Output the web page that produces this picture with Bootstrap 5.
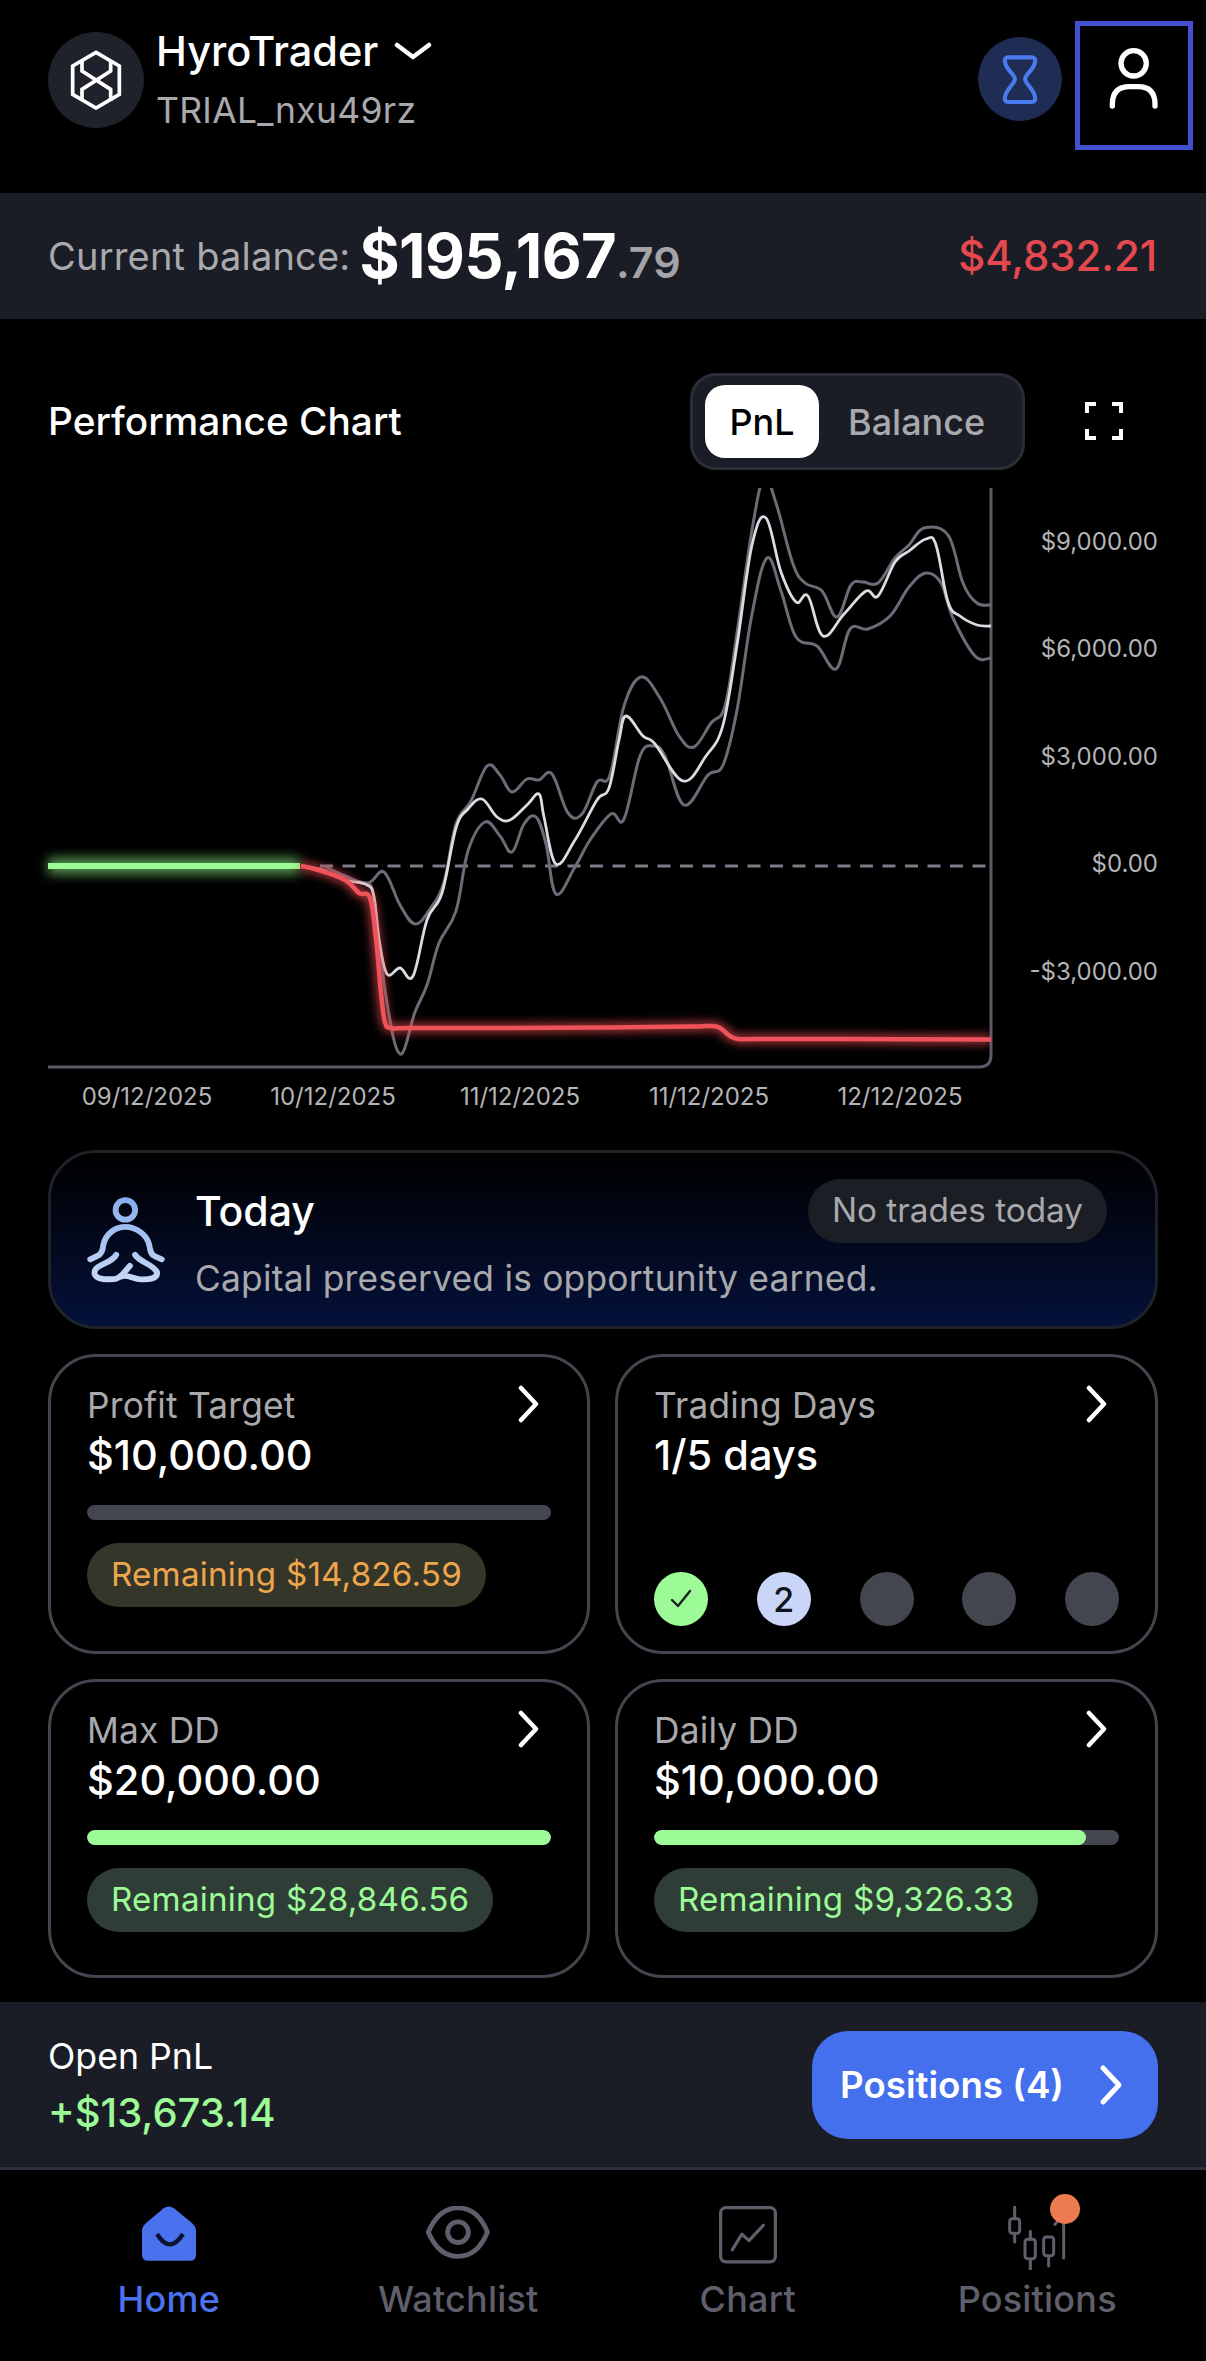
<!DOCTYPE html>
<html lang="en">
<head>
<meta charset="utf-8">
<title>HyroTrader</title>
<link rel="stylesheet" href="https://cdn.jsdelivr.net/npm/bootstrap@5.3.0/dist/css/bootstrap.min.css">
<style>
html,body{margin:0;background:#000;}
body{width:1206px;height:2361px;overflow:hidden;font-family:Inter,"Liberation Sans",sans-serif;color:#fff;}
.muted{color:#a9a9ad;}
.top-bar{height:193px;padding:21px 13px 0 48px;}
.logo-disc{width:96px;height:96px;margin-top:11px;background:#1f212b;border-radius:50%;}
.brand-box{margin-left:12px;}
.brand-name{font-size:41.5px;line-height:50px;font-weight:500;margin-top:5px;}
.brand-sub{font-size:35.5px;line-height:40px;margin-top:15px;letter-spacing:.3px;}
.timer-disc{width:84px;height:84px;margin-top:16px;background:#1f2d55;border-radius:50%;}
.user-box{width:118px;height:129px;margin-left:13px;padding-bottom:13px;border:5px solid #4450cf;}
.balance-bar{height:126px;padding:0 49px 0 48px;background:#1a1d26;}
.bal-label{font-size:38px;letter-spacing:.2px;}
.bal-main{font-size:61.4px;font-weight:700;margin-left:9px;letter-spacing:-.6px;line-height:76px;}
.bal-cents{font-size:43px;font-weight:600;color:#a4a4a8;}
.bal-red{font-size:41.8px;font-weight:500;color:#e5484f;}
.chart-head{height:169px;padding:54px 48px 18px;}
.chart-title{font-size:38.8px;font-weight:500;}
.seg{width:335px;height:97px;padding:10px 12px;background:#1a1d26;border:3px solid #2a2d36;border-radius:26px;}
.seg-on{width:114px;height:73px;background:#fff;color:#000;border-radius:20px;font-size:36px;font-weight:500;}
.seg-off{font-size:36px;font-weight:500;color:#a9a9ad;margin-left:29px;}
.expand{width:38px;height:38px;margin-left:60px;margin-right:35px;margin-top:-2px;display:block;}
.chart-svg{display:block;width:1206px;height:632px;}
.chart-svg text{font-family:Inter,"Liberation Sans",sans-serif;font-size:24px;fill:#b4b4b8;}
.today{margin:30px 48px 0;height:179px;padding:0 48px 0 36px;border:3px solid #1f2229;border-radius:48px;background:linear-gradient(180deg,#000 0%,#030a22 60%,#04113a 100%);}
.today-icon{width:78px;height:87px;flex:none;}
.today-body{margin-left:30px;flex:1;}
.today-title{font-size:41px;font-weight:500;line-height:50px;}
.today-pill{height:64px;padding:0 24px;background:#1b1e25;border-radius:32px;font-size:33.3px;font-weight:400;color:#a9a9ad;}
.today-text{font-size:35.4px;line-height:44px;margin-top:14px;letter-spacing:.2px;}
.stat-grid{display:grid;grid-template-columns:542px 543px;gap:25px;margin:25px 48px 0;}
.stat{height:299.5px;padding:0 36px;background:#000;color:#fff;border:3px solid #43454f;border-radius:48px;}
.stat-head{height:47px;margin-top:25px;}
.stat-label{font-size:35.3px;line-height:47px;letter-spacing:.2px;}
.stat-chev{width:22px;height:38px;margin-right:11px;margin-top:3px;}
.stat-val{font-size:41.5px;line-height:50px;font-weight:500;margin-top:1px;}
.stat-bar{height:15px;margin-top:25px;background:#43454f;border-radius:8px;}
.stat-bar .progress-bar{background:#9dfb97;border-radius:8px;}
.stat-pill{height:64px;margin-top:23px;padding:0 24px;border-radius:32px;font-size:33.2px;font-weight:400;letter-spacing:.2px;}
.pill-amber{background:#35362a;color:#eea54c;}
.pill-green{background:#2e3e36;color:#9dfb97;}
.dot-row{margin-top:92px;}
.day-dot{width:54px;height:54px;border-radius:50%;background:#43454f;}
.day-done{background:#9dfb97;}
.day-now{background:#cad6f8;color:#10131c;font-size:34px;font-weight:500;}
.open-bar{height:168px;margin-top:24px;padding:0 48px;background:#1a1d26;border-bottom:3px solid #2d303a;}
.open-label{font-size:35.7px;line-height:50px;}
.open-val{font-size:40px;line-height:50px;font-weight:500;color:#9dfb97;margin-top:7px;}
.pos-btn{width:346px;height:108px;padding:0 35px 0 28px;background:#4470ee;border:0;border-radius:36px;color:#fff;font-size:36.7px;font-weight:600;}
.pos-btn:hover{background:#4470ee;color:#fff;}
.bottom-nav{height:191px;padding:0 24px;}
.tab{padding-top:36px;font-size:36px;font-weight:500;color:#5f5f6b;line-height:44px;letter-spacing:.2px;}
.tab-active{color:#4a72ee;}
.tab-ico{display:block;height:64px;margin:0 auto 7px;}
.tab-pin{position:absolute;width:30px;height:30px;top:24px;left:157px;border-radius:50%;background:#ee7a4f;}
</style>
</head>
<body>
<header class="top-bar d-flex align-items-start">
  <div class="logo-disc d-flex align-items-center justify-content-center flex-shrink-0">
    <svg width="52" height="60" viewBox="150 118 156 178" fill="none" stroke="#fff" stroke-width="11"><path d="M228 124L298 165V250L228 291L158 250V165Z"/><path d="M186 147V180L272 235V270M272 147V180L186 235V270"/></svg>
  </div>
  <div class="brand-box">
    <div class="brand-name d-flex align-items-center gap-3">HyroTrader
      <svg width="38" height="20" viewBox="0 0 38 20" fill="none" stroke="#fff" stroke-width="4.5" stroke-linecap="round" stroke-linejoin="round"><path d="M3 4L19 16L35 4"/></svg>
    </div>
    <div class="brand-sub muted">TRIAL_nxu49rz</div>
  </div>
  <div class="ms-auto d-flex align-items-start">
    <div class="timer-disc d-flex align-items-center justify-content-center">
      <svg width="38" height="50" viewBox="125 132 110 146" fill="none" stroke="#4a7aee" stroke-width="12" stroke-linejoin="round"><path d="M146 142H214Q226 142 224 155C220 180 195 190 195 205C195 220 220 232 224 258Q226 272 214 272H146Q134 272 136 258C140 232 165 220 165 205C165 190 140 180 136 155Q134 142 146 142Z"/></svg>
    </div>
    <div class="user-box d-flex align-items-center justify-content-center">
      <svg width="50" height="62" viewBox="448 118 150 182" fill="none" stroke="#fff" stroke-width="16" stroke-linecap="round"><circle cx="522" cy="162" r="38"/><path d="M458 290V285Q458 232 510 232H535Q586 232 586 285V290"/></svg>
    </div>
  </div>
</header>

<section class="balance-bar d-flex align-items-center justify-content-between">
  <div class="d-flex align-items-center"><span class="bal-label muted">Current balance:</span><span class="d-flex align-items-baseline"><span class="bal-main">$195,167</span><span class="bal-cents">.79</span></span></div>
  <div class="bal-red">$4,832.21</div>
</section>

<section class="chart-head d-flex align-items-center">
  <div class="chart-title me-auto">Performance Chart</div>
  <div class="seg d-flex align-items-center">
    <div class="seg-on d-flex align-items-center justify-content-center">PnL</div>
    <div class="seg-off">Balance</div>
  </div>
  <svg class="expand" viewBox="0 0 38 38" fill="none" stroke="#fff" stroke-width="4"><path d="M2 11V2H11M27 2H36V11M36 27V36H27M11 36H2V27"/></svg>
</section>

<svg class="chart-svg" viewBox="0 488 1206 632" fill="none">
  <defs>
    <clipPath id="plotClip"><rect x="0" y="486" width="991" height="580"/></clipPath>
    <filter id="glowRed" filterUnits="userSpaceOnUse" x="260" y="840" width="760" height="230"><feGaussianBlur stdDeviation="5"/></filter>
    <filter id="glowGreen" filterUnits="userSpaceOnUse" x="20" y="836" width="300" height="60"><feGaussianBlur stdDeviation="6"/></filter>
  </defs>
  <path d="M991 488V1055Q991 1067 979 1067H48" stroke="#5a5b66" stroke-width="3"/>
  <path d="M320 866H991" stroke="#7b7c88" stroke-width="3" stroke-dasharray="13 9.5"/>
  <g clip-path="url(#plotClip)">
    <path id="lineUp" stroke="#6b6c77" stroke-width="3"/>
    <path id="lineDown" stroke="#6b6c77" stroke-width="3"/>
    <path id="lineMid" stroke="#dcdce0" stroke-width="2.8"/>
    <path d="M48 866H300" stroke="#7fdc78" stroke-width="16" opacity=".7" filter="url(#glowGreen)"/>
    <path d="M48 866H300" stroke="#9dfb97" stroke-width="6"/>
    <path id="lineRedGlow" stroke="#e5484f" stroke-width="9" opacity=".75" filter="url(#glowRed)"/>
    <path id="lineRed" stroke="#f0525b" stroke-width="4.5"/>
  </g>
  <g text-anchor="end">
    <text x="1158" y="550">$9,000.00</text>
    <text x="1158" y="657">$6,000.00</text>
    <text x="1158" y="765">$3,000.00</text>
    <text x="1158" y="872">$0.00</text>
    <text x="1158" y="980">-$3,000.00</text>
  </g>
  <g text-anchor="middle">
    <text x="147" y="1105">09/12/2025</text>
    <text x="333" y="1105">10/12/2025</text>
    <text x="520" y="1105">11/12/2025</text>
    <text x="709" y="1105">11/12/2025</text>
    <text x="900" y="1105">12/12/2025</text>
  </g>
</svg>

<section class="today d-flex align-items-center">
  <svg class="today-icon" viewBox="130 80 240 262" fill="none" stroke="url(#medGrad)" stroke-width="18" stroke-linecap="round" stroke-linejoin="round">
    <defs><linearGradient id="medGrad" gradientUnits="userSpaceOnUse" x1="0" y1="85" x2="0" y2="340"><stop offset="0" stop-color="#88aeec"/><stop offset="1" stop-color="#c8d8f6"/></linearGradient></defs>
    <circle cx="248" cy="120" r="30"/>
    <path d="M140 272L165 260Q178 252 180 228C188 190 220 172 248 172C280 172 315 195 322 230C325 250 328 258 338 262L360 272"/>
    <path d="M220 258C205 285 165 285 155 305C145 330 175 335 215 333C235 330 250 305 262 292"/>
    <path d="M278 258C290 280 330 285 345 310C350 332 320 335 290 333C270 330 250 318 235 325"/>
  </svg>
  <div class="today-body">
    <div class="d-flex align-items-center justify-content-between">
      <div class="today-title">Today</div>
      <div class="today-pill d-flex align-items-center">No trades today</div>
    </div>
    <div class="today-text muted">Capital preserved is opportunity earned.</div>
  </div>
</section>

<section class="stat-grid">
  <article class="stat card">
    <div class="stat-head d-flex justify-content-between"><div class="stat-label muted">Profit Target</div><svg class="stat-chev" viewBox="0 0 22 38" fill="none" stroke="#fff" stroke-width="4.5" stroke-linecap="round" stroke-linejoin="round"><path d="M3 3L18 19L3 35"/></svg></div>
    <div class="stat-val">$10,000.00</div>
    <div class="stat-bar progress"></div>
    <div><span class="stat-pill pill-amber d-inline-flex align-items-center">Remaining $14,826.59</span></div>
  </article>
  <article class="stat card">
    <div class="stat-head d-flex justify-content-between"><div class="stat-label muted">Trading Days</div><svg class="stat-chev" viewBox="0 0 22 38" fill="none" stroke="#fff" stroke-width="4.5" stroke-linecap="round" stroke-linejoin="round"><path d="M3 3L18 19L3 35"/></svg></div>
    <div class="stat-val">1/5 days</div>
    <div class="dot-row d-flex justify-content-between">
      <div class="day-dot day-done d-flex align-items-center justify-content-center"><svg width="24" height="22" viewBox="0 0 24 22" fill="none" stroke="#14241a" stroke-width="2.4" stroke-linecap="round" stroke-linejoin="round"><path d="M3 12L9 18L21 3"/></svg></div>
      <div class="day-dot day-now d-flex align-items-center justify-content-center">2</div>
      <div class="day-dot"></div>
      <div class="day-dot"></div>
      <div class="day-dot"></div>
    </div>
  </article>
  <article class="stat card">
    <div class="stat-head d-flex justify-content-between"><div class="stat-label muted">Max DD</div><svg class="stat-chev" viewBox="0 0 22 38" fill="none" stroke="#fff" stroke-width="4.5" stroke-linecap="round" stroke-linejoin="round"><path d="M3 3L18 19L3 35"/></svg></div>
    <div class="stat-val">$20,000.00</div>
    <div class="stat-bar progress"><div class="progress-bar" style="width:100%"></div></div>
    <div><span class="stat-pill pill-green d-inline-flex align-items-center">Remaining $28,846.56</span></div>
  </article>
  <article class="stat card">
    <div class="stat-head d-flex justify-content-between"><div class="stat-label muted">Daily DD</div><svg class="stat-chev" viewBox="0 0 22 38" fill="none" stroke="#fff" stroke-width="4.5" stroke-linecap="round" stroke-linejoin="round"><path d="M3 3L18 19L3 35"/></svg></div>
    <div class="stat-val">$10,000.00</div>
    <div class="stat-bar progress"><div class="progress-bar" style="width:93%"></div></div>
    <div><span class="stat-pill pill-green d-inline-flex align-items-center">Remaining $9,326.33</span></div>
  </article>
</section>

<section class="open-bar d-flex align-items-center justify-content-between">
  <div>
    <div class="open-label">Open PnL</div>
    <div class="open-val">+$13,673.14</div>
  </div>
  <button type="button" class="btn pos-btn d-flex align-items-center justify-content-between">Positions (4)
    <svg width="24" height="42" viewBox="0 0 24 42" fill="none" stroke="#fff" stroke-width="5" stroke-linecap="round" stroke-linejoin="round"><path d="M4 4L20 21L4 38"/></svg>
  </button>
</section>

<nav class="bottom-nav nav nav-justified">
  <div class="nav-item tab tab-active text-center">
    <svg class="tab-ico" width="54" viewBox="247 87 162 190"><path d="M312 93Q327 82 343 93L396 136Q409 147 409 160V232Q409 250 391 250H265Q247 250 247 232V160Q247 147 260 136Z" fill="#4a72ee"/><path d="M292 170Q330 232 370 170" fill="none" stroke="#0c1430" stroke-width="13"/></svg>
    Home
  </div>
  <div class="nav-item tab text-center">
    <svg class="tab-ico" width="64" viewBox="1098 87 198 198" fill="none" stroke="#5f5f6b" stroke-width="15" stroke-linejoin="round"><path d="M1105 168C1130 110 1165 93 1197 93C1230 93 1265 110 1288 168C1265 225 1230 243 1197 243C1165 243 1130 225 1105 168Z"/><circle cx="1197" cy="168" r="32"/></svg>
    Watchlist
  </div>
  <div class="nav-item tab text-center">
    <svg class="tab-ico" width="58" viewBox="146 80 178 196" fill="none" stroke="#5f5f6b" stroke-width="10" stroke-linecap="round" stroke-linejoin="round"><rect x="151" y="85" width="168" height="166" rx="16"/><path d="M187 214L216 166L238 186L282 139"/></svg>
    Chart
  </div>
  <div class="nav-item tab text-center position-relative">
    <svg class="tab-ico" width="58" viewBox="1005 72 174 192" fill="none" stroke="#5f5f6b" stroke-width="9" stroke-linecap="round"><path d="M1025 72V108M1025 155V180M1072 148V172M1072 232V264M1127 222V252M1172 120V228M1146 127L1158 112"/><rect x="1010" y="110" width="30" height="44" rx="8"/><rect x="1056" y="172" width="31" height="58" rx="8"/><rect x="1112" y="165" width="30" height="56" rx="8"/></svg>
    <span class="tab-pin"></span>
    Positions
  </div>
</nav>

<script>
function smooth(p){
  var d='M'+p[0][0]+' '+p[0][1];
  for(var i=0;i<p.length-1;i++){
    var a=p[Math.max(i-1,0)],b=p[i],c=p[i+1],e=p[Math.min(i+2,p.length-1)];
    var t=5.5;
    d+='C'+(b[0]+(c[0]-a[0])/t).toFixed(1)+' '+(b[1]+(c[1]-a[1])/t).toFixed(1)+' '+(c[0]-(e[0]-b[0])/t).toFixed(1)+' '+(c[1]-(e[1]-b[1])/t).toFixed(1)+' '+c[0]+' '+c[1];
  }
  return d;
}
var mid=[[301,866],[323,870],[345,880],[367,885],[374,897],[379,939],[387,974],[400,968],[413,976],[427,920],[442,893],[456,828],[468,809],[482,799],[497,817],[510,820],[527,805],[539,794],[544,817],[556,864],[575,840],[597,800],[609,788],[619,740],[626,716],[643,736],[655,744],[683,781],[706,756],[723,725],[737,645],[752,545],[766,518],[781,572],[796,602],[808,596],[823,636],[844,614],[866,591],[878,596],[895,562],[909,551],[926,539],[936,545],[948,602],[960,616],[977,625],[991,626]];
var up=[[323,866],[345,876],[368,883],[384,872],[400,905],[415,924],[430,909],[444,882],[456,824],[471,801],[487,766],[500,775],[512,792],[527,779],[539,780],[552,774],[568,813],[582,814],[597,782],[610,775],[624,706],[641,677],[660,698],[679,736],[694,747],[711,723],[725,706],[737,633],[752,530],[764,478],[776,503],[793,564],[805,583],[822,591],[837,617],[851,585],[863,582],[878,583],[895,558],[909,545],[924,528],[948,535],[963,583],[977,603],[991,605]];
var down=[[368,884],[374,899],[386,997],[400,1054],[415,1012],[427,985],[439,943],[456,911],[468,851],[485,822],[500,836],[512,852],[524,824],[536,817],[546,844],[556,894],[575,867],[590,840],[611,814],[624,819],[640,756],[653,746],[665,756],[684,805],[708,775],[723,765],[737,710],[752,614],[767,558],[781,591],[796,637],[817,646],[836,669],[850,629],[868,629],[890,616],[909,587],[926,573],[941,583],[953,618],[975,656],[991,658]];
var red=[[301,866],[318,870],[345,880],[359,893],[370,898],[376,939],[381,993],[385,1022],[391,1028],[410,1028],[500,1028],[599,1027.5],[690,1026.5],[712,1026],[720,1028],[730,1036],[738,1039],[756,1039],[842,1039],[991,1039.5]];
document.getElementById('lineMid').setAttribute('d',smooth(mid));
document.getElementById('lineUp').setAttribute('d',smooth(up));
document.getElementById('lineDown').setAttribute('d',smooth(down));
document.getElementById('lineRed').setAttribute('d',smooth(red));
document.getElementById('lineRedGlow').setAttribute('d',smooth(red));
</script>
<script src="https://cdn.jsdelivr.net/npm/bootstrap@5.3.0/dist/js/bootstrap.bundle.min.js"></script>
</body>
</html>
